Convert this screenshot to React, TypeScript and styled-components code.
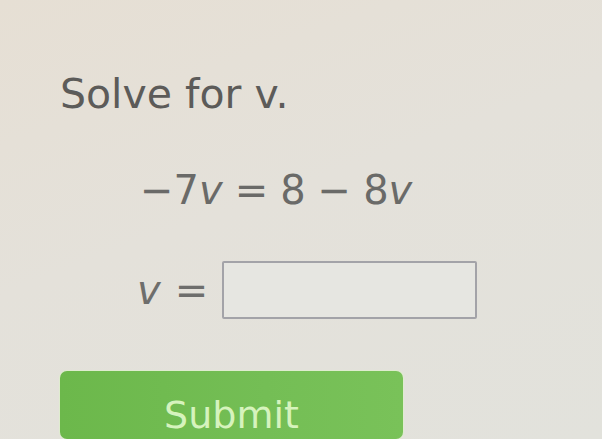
import React from "react";
import styled, { createGlobalStyle } from "styled-components";

const Global = createGlobalStyle`
  html, body { margin: 0; padding: 0; }
  body {
    width: 602px;
    height: 439px;
    overflow: hidden;
    font-family: "DejaVu Sans", Verdana, sans-serif;
  }
`;

const Page = styled.div`
  width: 602px;
  height: 439px;
  box-sizing: border-box;
  padding: 70px 0 0 60px;
  display: flex;
  flex-direction: column;
  background: linear-gradient(160deg, #e6dfd4 0%, #e4e1da 45%, #e2e2dc 100%);
  color: #595959;
  overflow: hidden;
`;

const Prompt = styled.div`
  font-size: 41px;
  line-height: 48px;
  color: #5c5b59;
`;

const Equation = styled.div`
  margin: 48px 0 0 80px;
  font-size: 40px;
  line-height: 48px;
  color: #6a6a68;
  display: flex;
  gap: 12px;
  align-items: baseline;
`;

const Var = styled.span`
  font-style: italic;
`;

const AnswerRow = styled.div`
  margin: 47px 0 0 77px;
  display: flex;
  align-items: center;
  gap: 14px;
  font-size: 40px;
  color: #6e6e6c;
`;

const AnswerBox = styled.div`
  width: 251px;
  height: 54px;
  border: 2px solid #a3a3a8;
  border-radius: 2px;
  background: #e6e6e1;
`;

const SubmitButton = styled.button`
  margin-top: 52px;
  width: 343px;
  height: 90px;
  border: none;
  border-radius: 7px;
  background: linear-gradient(90deg, #6cb84b 0%, #74be55 60%, #79c259 100%);
  box-shadow: 0 0 0 1px #dfeccf;
  color: #d6f3bd;
  font-family: "DejaVu Sans", Verdana, sans-serif;
  font-size: 38px;
  line-height: 44px;
  padding: 22px 0 0 0;
  display: flex;
  align-items: flex-start;
  justify-content: center;
  box-sizing: border-box;
`;

export default function App() {
  return (
    <>
      <Global />
      <Page>
        <Prompt>Solve for v.</Prompt>
        <Equation>
          <span>
            −7<Var>v</Var>
          </span>
          <span>=</span>
          <span>8</span>
          <span>−</span>
          <span>
            8<Var>v</Var>
          </span>
        </Equation>
        <AnswerRow>
          <Var>v</Var>
          <span>=</span>
          <AnswerBox />
        </AnswerRow>
        <SubmitButton>Submit</SubmitButton>
      </Page>
    </>
  );
}
